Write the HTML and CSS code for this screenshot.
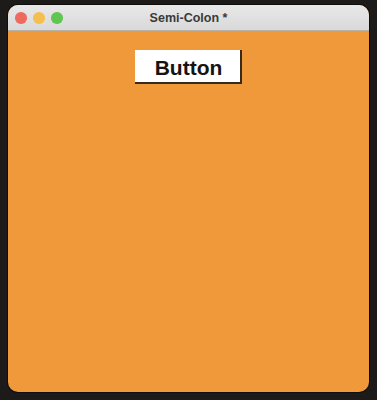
FILE: index.html
```html
<!DOCTYPE html>
<html>
<head>
<meta charset="utf-8">
<link rel="stylesheet" href="styles.css">
</head>
<body>
<div class="window">
  <div class="titlebar">
    <div class="lights">
      <span class="light red"></span>
      <span class="light yellow"></span>
      <span class="light green"></span>
    </div>
    <div class="title">Semi-Colon *</div>
  </div>
  <div class="content">
    <button class="btn">Button</button>
  </div>
</div>
</body>
</html>
```

FILE: styles.css
```css
html, body {
  margin: 0;
  padding: 0;
}
body {
  width: 377px;
  height: 400px;
  background: #1d1b19;
  padding: 5px 8px 0 8px;
  box-sizing: border-box;
  font-family: "Liberation Sans", Arial, sans-serif;
}
.window {
  width: 361px;
  height: 387px;
  border-radius: 10px;
  overflow: hidden;
  background: #f0993a;
  display: flex;
  flex-direction: column;
  box-shadow: 0 0 0 1px #0f0e0d;
}
.titlebar {
  height: 25px;
  background: linear-gradient(#e8e8e8, #d9d9d9);
  border-bottom: 1px solid #b9b2a9;
  position: relative;
  display: flex;
  align-items: center;
  justify-content: center;
  flex-shrink: 0;
}
.lights {
  position: absolute;
  left: 7px;
  top: 7px;
  display: flex;
  gap: 6.5px;
}
.light {
  width: 11.5px;
  height: 11.5px;
  border-radius: 50%;
  display: block;
}
.red { background: #ec6a5e; }
.yellow { background: #f4bf4f; }
.green { background: #61c554; }
.title {
  font-size: 12.5px;
  font-weight: bold;
  color: #3a3a3a;
  margin-top: 1px;
}
.content {
  flex: 1;
  display: flex;
  flex-direction: column;
  align-items: center;
  padding-top: 19px;
}
.btn {
  width: 107px;
  height: 34px;
  background: #ffffff;
  border: none;
  border-right: 2px solid #3a2a1a;
  border-bottom: 2px solid #3a2a1a;
  box-sizing: border-box;
  font-family: "Liberation Sans", Arial, sans-serif;
  font-weight: bold;
  font-size: 21px;
  color: #141414;
  padding: 3px 0 0 2px;
  margin: 0;
}
```
